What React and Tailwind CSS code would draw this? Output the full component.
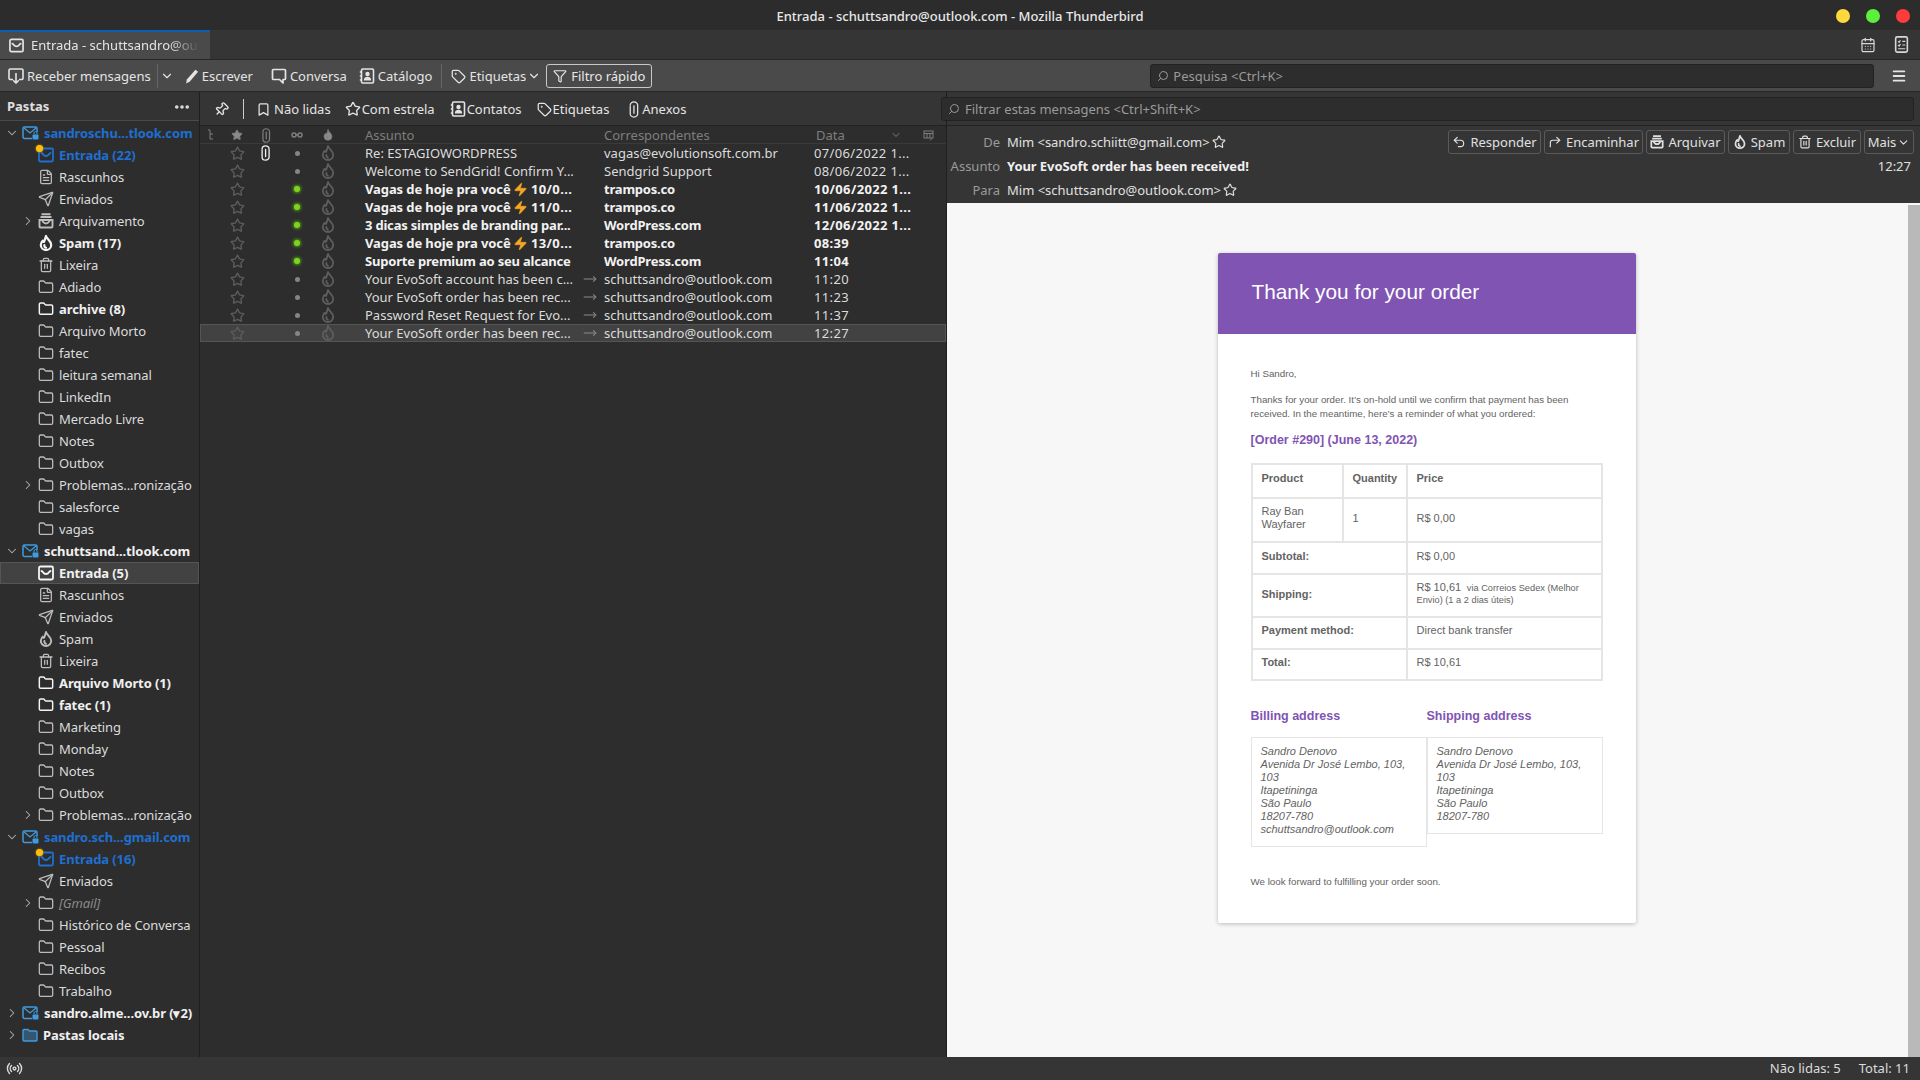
import React from "react";
import { Bookmark, CalendarDays, ChevronDown, ChevronRight, Ellipsis, FileText, Filter, Folder, Menu, Pin, Radio, Search, Send, Star, Tag, Trash2, MoveRight, Zap, Undo2, CornerUpRight } from "lucide-react";

const Inbox = ({ size = 16, className = "" }) => (
  <svg width={size} height={size} viewBox="0 0 16 16" fill="none" stroke="currentColor" strokeWidth="1.8" className={className}>
    <rect x="1" y="1.5" width="14" height="13" rx="1.5" />
    <path d="M3.5 6 C5 6 5 9 8 9 C11 9 11 6 12.5 6" strokeLinecap="round" />
  </svg>
);

const Flame = ({ size = 16, className = "", fill = "none", strokeWidth = 1.8 }) => (
  <svg width={size} height={size} viewBox="0 0 16 16" fill={fill} stroke="currentColor" strokeWidth={strokeWidth} strokeLinejoin="round" strokeLinecap="round" className={className}>
    <path d="M8 1 C8.5 4 13.2 5.5 13.2 10 A5.2 5 0 0 1 2.8 10 C2.8 8 3.6 6.8 4.8 5.6 C5 6.8 5.6 7.2 6.2 6.6 C7 5 7.2 3 8 1 Z" />
    <path d="M8 12.8 A2.5 2.5 0 0 1 6.4 10" />
  </svg>
);

const Clip = ({ size = 14, className = "", strokeWidth = 1.3 }) => (
  <svg width={size * 0.7} height={size} viewBox="0 0 11 16" fill="none" stroke="currentColor" strokeWidth={strokeWidth} strokeLinecap="round" className={className}>
    <path d="M5.5 4.5 V11.5" />
    <path d="M2 4 A3.5 3.2 0 0 1 9 4 V12 A3.5 3.2 0 0 1 2 12 V5" />
  </svg>
);

const Archive = ({ size = 16, className = "", strokeWidth = 1.6 }) => (
  <svg width={size} height={size} viewBox="0 0 16 16" fill="none" stroke="currentColor" strokeWidth={strokeWidth} className={className}>
    <path d="M3.5 1.2 H12.5 M2.5 4 H13.5" />
    <path d="M1.5 7 H14.5 V13.5 A1 1 0 0 1 13.5 14.5 H2.5 A1 1 0 0 1 1.5 13.5 Z" />
    <path d="M4 7 C5 9.5 6 10.5 8 10.5 C10 10.5 11 9.5 12 7" />
  </svg>
);

const Contact = ({ size = 16, className = "" }) => (
  <svg width={size} height={size} viewBox="0 0 16 16" fill="none" stroke="currentColor" strokeWidth="1.6" className={className}>
    <rect x="2.5" y="1" width="12" height="14" rx="1.2" />
    <path d="M0.8 4 H3 M0.8 8 H3 M0.8 12 H3" />
    <circle cx="8.5" cy="6" r="2.2" fill="currentColor" stroke="none" />
    <path d="M4.8 12.5 C5 9.5 6.5 8.8 8.5 8.8 C10.5 8.8 12 9.5 12.2 12.5 Z" fill="currentColor" stroke="none" />
  </svg>
);

const GetMail = ({ size = 16, className = "" }) => (
  <svg width={size} height={size} viewBox="0 0 16 16" fill="none" stroke="currentColor" strokeWidth="1.6" className={className}>
    <path d="M5 11.5 H2.5 A1.3 1.3 0 0 1 1 10.2 V2.3 A1.3 1.3 0 0 1 2.5 1 H13.5 A1.3 1.3 0 0 1 15 2.3 V10.2 A1.3 1.3 0 0 1 13.5 11.5 H11" />
    <path d="M8 5 V15 M5.2 12.2 L8 15 L10.8 12.2" />
  </svg>
);

const Bubble = ({ size = 16, className = "" }) => (
  <svg width={size} height={size} viewBox="0 0 16 16" fill="none" stroke="currentColor" strokeWidth="1.7" strokeLinejoin="round" className={className}>
    <path d="M2.5 1.5 H13.5 A1 1 0 0 1 14.5 2.5 V10.5 A1 1 0 0 1 13.5 11.5 H12 V15 L8.5 11.5 H2.5 A1 1 0 0 1 1.5 10.5 V2.5 A1 1 0 0 1 2.5 1.5 Z" />
  </svg>
);

const Quill = ({ size = 16, className = "" }) => (
  <svg width={size} height={size} viewBox="0 0 16 16" fill="currentColor" className={className}>
    <path d="M12.2 0.8 L15 3 L6 13.6 L2.2 15.4 L3 11.2 Z" />
  </svg>
);

const Tasks = ({ size = 16, className = "" }) => (
  <svg width={size} height={size} viewBox="0 0 16 16" fill="none" stroke="currentColor" strokeWidth="1.5" className={className}>
    <rect x="2.5" y="0.8" width="11" height="14.4" rx="1.5" />
    <path d="M4.8 5 L5.8 6 L7 4 M8.8 5 H11.5 M4.8 8.5 L5.8 9.5 L7 7.5 M8.8 8.5 H11.5 M4.8 12 H11.5" strokeWidth="1.1" />
  </svg>
);

const Account = ({ local = false }) =>
  local ? (
    <svg width="16" height="14" viewBox="0 0 16 14" className="shrink-0">
      <path d="M1 2.5 A1 1 0 0 1 2 1.5 H6 L7.5 3 H14 A1 1 0 0 1 15 4 V12 A1 1 0 0 1 14 13 H2 A1 1 0 0 1 1 12 Z" fill="#35566f" stroke="#3f9be0" strokeWidth="1.4" />
    </svg>
  ) : (
    <svg width="17" height="14" viewBox="0 0 17 14" fill="none" className="shrink-0">
      <path d="M10 12.5 H2.5 A1.5 1.5 0 0 1 1 11 V2.5 A1.5 1.5 0 0 1 2.5 1 H13.5 A1.5 1.5 0 0 1 15 2.5 V6" stroke="#3f9be0" strokeWidth="1.5" />
      <path d="M2 2 L8 7 L14 2" stroke="#3f9be0" strokeWidth="1.3" />
      <rect x="10.5" y="8.5" width="6" height="5" rx="1" fill="#3f9be0" />
      <path d="M12 8.5 V7 A1.5 1.5 0 0 1 15 7 V8.5" stroke="#3f9be0" strokeWidth="1" />
    </svg>
  );

const ICONS = { inbox: Inbox, draft: FileText, sent: Send, archive: Archive, spam: Flame, trash: Trash2, folder: Folder };

const folders = [
  { t: "sandroschu...tlook.com", acc: 1, open: 1, blue: 1 },
  { t: "Entrada (22)", i: "inbox", blue: 1, b: 1, dot: 1 },
  { t: "Rascunhos", i: "draft" },
  { t: "Enviados", i: "sent" },
  { t: "Arquivamento", i: "archive", exp: 1 },
  { t: "Spam (17)", i: "spam", b: 1 },
  { t: "Lixeira", i: "trash" },
  { t: "Adiado", i: "folder" },
  { t: "archive (8)", i: "folder", b: 1 },
  { t: "Arquivo Morto", i: "folder" },
  { t: "fatec", i: "folder" },
  { t: "leitura semanal", i: "folder" },
  { t: "LinkedIn", i: "folder" },
  { t: "Mercado Livre", i: "folder" },
  { t: "Notes", i: "folder" },
  { t: "Outbox", i: "folder" },
  { t: "Problemas...ronização", i: "folder", exp: 1 },
  { t: "salesforce", i: "folder" },
  { t: "vagas", i: "folder" },
  { t: "schuttsand...tlook.com", acc: 1, open: 1 },
  { t: "Entrada (5)", i: "inbox", b: 1, sel: 1 },
  { t: "Rascunhos", i: "draft" },
  { t: "Enviados", i: "sent" },
  { t: "Spam", i: "spam" },
  { t: "Lixeira", i: "trash" },
  { t: "Arquivo Morto (1)", i: "folder", b: 1 },
  { t: "fatec (1)", i: "folder", b: 1 },
  { t: "Marketing", i: "folder" },
  { t: "Monday", i: "folder" },
  { t: "Notes", i: "folder" },
  { t: "Outbox", i: "folder" },
  { t: "Problemas...ronização", i: "folder", exp: 1 },
  { t: "sandro.sch...gmail.com", acc: 1, open: 1, blue: 1 },
  { t: "Entrada (16)", i: "inbox", blue: 1, b: 1, dot: 1 },
  { t: "Enviados", i: "sent" },
  { t: "[Gmail]", i: "folder", exp: 1, dim: 1 },
  { t: "Histórico de Conversa", i: "folder" },
  { t: "Pessoal", i: "folder" },
  { t: "Recibos", i: "folder" },
  { t: "Trabalho", i: "folder" },
  { t: "sandro.alme...ov.br (▾2)", acc: 1 },
  { t: "Pastas locais", acc: 1, local: 1 },
];

function FolderRow({ f }) {
  const Ic = f.i ? ICONS[f.i] : null;
  const color = f.blue ? "text-[#1f6fd0]" : f.dim ? "text-[#8a8a8a] italic" : f.b || f.acc ? "text-[#f0f0f0]" : "text-[#dcdcdc]";
  return (
    <div className={`h-[22px] flex items-center relative tracking-[-0.1px] ${f.sel ? "bg-[#424242] outline outline-[#555555] -outline-offset-1" : ""} ${f.b || f.acc ? "font-bold" : ""} ${color}`}>
      {f.acc ? (
        <>
          <div className="w-[22px] flex justify-center shrink-0 text-[#b0b0b0] pl-px">
            {f.open ? <ChevronDown size={14} strokeWidth={1.8} /> : <ChevronRight size={14} strokeWidth={1.8} />}
          </div>
          <Account local={f.local} />
          <span className="ml-[5px] whitespace-nowrap">{f.t}</span>
        </>
      ) : (
        <>
          <div className="w-[38px] flex justify-end pr-[3px] shrink-0 text-[#b0b0b0]">
            {f.exp ? <ChevronRight size={14} strokeWidth={1.8} /> : null}
          </div>
          <div className={`relative w-[16px] flex justify-center shrink-0 ${f.blue ? "text-[#1f6fd0]" : f.b ? "text-[#f5f5f5]" : "text-[#bdbdbd]"}`}>
            <Ic size={16} strokeWidth={f.b ? 2.2 : 1.9} />
            {f.dot ? <span className="absolute -left-[2px] -top-[2px] w-[7px] h-[7px] rounded-full bg-[#ffc107] shadow-[0_0_2px_#ff9800]" /> : null}
          </div>
          <span className="ml-[5px] whitespace-nowrap">{f.t}</span>
        </>
      )}
    </div>
  );
}

const msgs = [
  ["Re: ESTAGIOWORDPRESS", "vagas@evolutionsoft.com.br", "07/06/2022 1...", { clip: 1 }],
  ["Welcome to SendGrid! Confirm Y...", "Sendgrid Support", "08/06/2022 1...", {}],
  [["Vagas de hoje pra você ", "10/0..."], "trampos.co", "10/06/2022 1...", { u: 1 }],
  [["Vagas de hoje pra você ", "11/0..."], "trampos.co", "11/06/2022 1...", { u: 1 }],
  ["3 dicas simples de branding par...", "WordPress.com", "12/06/2022 1...", { u: 1 }],
  [["Vagas de hoje pra você ", "13/0..."], "trampos.co", "08:39", { u: 1 }],
  ["Suporte premium ao seu alcance", "WordPress.com", "11:04", { u: 1 }],
  ["Your EvoSoft account has been c...", "schuttsandro@outlook.com", "11:20", { out: 1 }],
  ["Your EvoSoft order has been rec...", "schuttsandro@outlook.com", "11:23", { out: 1 }],
  ["Password Reset Request for Evo...", "schuttsandro@outlook.com", "11:37", { out: 1 }],
  ["Your EvoSoft order has been rec...", "schuttsandro@outlook.com", "12:27", { out: 1, sel: 1 }],
];

const gridCols = "grid grid-cols-[22px_30px_28px_34px_28px_23px_215px_20px_4px_210px_1fr] items-center";

function MsgRow({ m }) {
  const [s, c, d, o] = m;
  return (
    <div className={`${gridCols} h-[18px] ${o.u ? "font-bold text-[#f2f2f2] tracking-[-0.2px]" : "text-[#dcdcdc]"} ${o.sel ? "bg-[#424242] outline outline-[#555555] -outline-offset-1" : ""}`}>
      <span />
      <span className="flex justify-center text-[#5c5c5c]"><Star size={15} strokeWidth={2.2} /></span>
      <span className="flex justify-center text-[#f0f0f0]">{o.clip ? <Clip size={16} /> : null}</span>
      <span className="flex justify-center">
        {o.u ? <span className="w-[6px] h-[6px] rounded-full bg-[#7ed321] shadow-[0_0_3px_1px_#4f9a10]" /> : <span className="w-[5px] h-[5px] rounded-full bg-[#858585]" />}
      </span>
      <span className="flex justify-center text-[#5e5e5e]"><Flame size={16} /></span>
      <span />
      <span className="whitespace-nowrap flex items-center">
        {Array.isArray(s) ? (
          <>
            <span className="whitespace-pre tracking-[-0.1px]">{s[0]}</span>
            <Zap size={15} className="text-[#f5a623] shrink-0 -ml-px" fill="#f5a623" strokeWidth={1} />
            <span className="whitespace-pre ml-[3px] tracking-[0.4px]">{s[1]}</span>
          </>
        ) : s}
      </span>
      <span className="flex justify-center text-[#8a8a8a]">{o.out ? <MoveRight size={14} strokeWidth={1.8} /> : null}</span>
      <span />
      <span className="whitespace-nowrap">{c}</span>
      <span className="whitespace-nowrap tracking-[0.35px]">{d}</span>
    </div>
  );
}

const TB = ({ icon: I, children, className = "", size = 15, sw = 2 }) => (
  <div className={`flex items-center gap-[3px] text-[#e4e4e4] whitespace-nowrap ${className}`}>
    <I size={size} strokeWidth={sw} className="shrink-0" />
    <span>{children}</span>
  </div>
);

const HB = ({ icon: I, children, w }) => (
  <div className={`h-[24px] border border-[#5a5a5a] rounded-[3px] flex items-center justify-center gap-[4px] text-[#e0e0e0] whitespace-nowrap ${w}`}>
    {I ? <I size={14} strokeWidth={2} className="shrink-0" /> : null}
    <span>{children}</span>
  </div>
);

const td = "border-2 border-[#e5e5e5] px-[9px] align-middle";

function Addr({ email, h }) {
  return (
    <div className={`w-[176px] ${h} border border-[#e5e5e5] pl-[9px] pt-[7px] italic leading-[13px] text-[11px] text-[#636363]`}>
      Sandro Denovo<br />Avenida Dr José Lembo, 103,<br />103<br />Itapetininga<br />São Paulo<br />18207-780
      {email ? <><br />schuttsandro@outlook.com</> : null}
    </div>
  );
}

export default function App() {
  return (
    <div className="w-[1920px] h-[1080px] overflow-hidden flex flex-col bg-[#2d2d2d] text-[13px] leading-none text-[#e0e0e0] font-['Noto_Sans',sans-serif]">
      {/* title bar */}
      <div className="h-[30px] shrink-0 bg-[#2c2c2c] relative flex items-center justify-center pt-[2px] text-[#e8e8e8] font-medium">
        Entrada - schuttsandro@outlook.com - Mozilla Thunderbird
        <div className="absolute right-[10px] top-[9px] flex gap-[16px]">
          <span className="w-[14px] h-[14px] rounded-full bg-[#ffd83d]" />
          <span className="w-[14px] h-[14px] rounded-full bg-[#5cf03a]" />
          <span className="w-[14px] h-[14px] rounded-full bg-[#ff3b3b]" />
        </div>
      </div>
      {/* tabs */}
      <div className="h-[30px] shrink-0 bg-[#353535] border-b border-[#262626] flex items-stretch">
        <div className="w-[210px] bg-[#4a4a4a] border-t-2 border-[#0b5fb5] flex items-center pl-[9px] gap-[7px] text-[#e4e4e4] whitespace-nowrap">
          <Inbox size={15} className="shrink-0" />
          <span className="w-[168px] overflow-hidden py-[3px] [mask-image:linear-gradient(to_right,black_82%,transparent)]">Entrada - schuttsandro@outlook.com</span>
        </div>
        <div className="flex-1" />
        <div className="flex items-center gap-[17px] pr-[10px] text-[#d8d8d8]">
          <CalendarDays size={16} strokeWidth={1.8} className="ml-[2px]" />
          <Tasks size={17} />
        </div>
      </div>
      {/* main toolbar */}
      <div className="h-[32px] shrink-0 bg-[#4a4a4a] border-b border-[#262626] flex items-center pl-[8px]">
        <TB icon={GetMail} size={16} className="pt-px">Receber mensagens</TB>
        <div className="w-px h-[24px] bg-[#666666] ml-[6px]" />
        <ChevronDown size={14} strokeWidth={2} className="ml-[2px] text-[#e4e4e4]" />
        <TB icon={Quill} className="ml-[10px] pt-px">Escrever</TB>
        <TB icon={Bubble} size={16} className="ml-[18px] pt-px">Conversa</TB>
        <TB icon={Contact} size={16} className="ml-[12px] pt-px">Catálogo</TB>
        <div className="w-px h-[24px] bg-[#666666] ml-[9px]" />
        <TB icon={Tag} className="ml-[9px] pt-px">Etiquetas</TB>
        <ChevronDown size={14} strokeWidth={2} className="ml-[1px] text-[#e4e4e4]" />
        <div className="ml-[5px] w-[106px] h-[24px] border border-[#c8c8c8] rounded-[3px] flex items-center justify-center gap-[4px] pt-px text-[#e8e8e8]">
          <Filter size={14} strokeWidth={2} />Filtro rápido
        </div>
        <div className="ml-[498px] w-[724px] h-[24px] bg-[#2d2d2d] border border-[#222222] rounded-[3px] flex items-center pl-[6px] pt-px gap-[4px] text-[#9a9a9a]">
          <Search size={12} className="-scale-x-100" />Pesquisa &lt;Ctrl+K&gt;
        </div>
        <Menu size={16} strokeWidth={2.8} className="ml-[17px] text-[#e4e4e4]" />
      </div>
      {/* body */}
      <div className="flex-1 flex min-h-0">
        {/* folders */}
        <div className="w-[200px] shrink-0 border-r border-[#1f1f1f] bg-[#2d2d2d] flex flex-col">
          <div className="h-[29px] border-b border-[#4a4a4a] bg-[#333333] flex items-center justify-between pl-[7px] pr-[8px] pt-px font-bold">
            <span>Pastas</span>
            <Ellipsis size={18} strokeWidth={2.8} />
          </div>
          <div className="pt-px">
            {folders.map((f, i) => <FolderRow key={i} f={f} />)}
          </div>
        </div>
        {/* list column */}
        <div className="w-[746px] shrink-0 flex flex-col bg-[#2d2d2d]">
          <div className="h-[34px] shrink-0 bg-[#353535] border-b border-[#222222] flex items-center pl-[14px] pt-px text-[#e4e4e4]">
            <Pin size={15} strokeWidth={2.2} className="rotate-45" />
            <div className="w-px h-[20px] bg-[#cccccc] ml-[14px]" />
            <TB icon={Bookmark} className="ml-[12px]">Não lidas</TB>
            <TB icon={Star} size={16} className="ml-[14px] !gap-[1px]">Com estrela</TB>
            <TB icon={Contact} size={16} className="ml-[15px] !gap-[1px]">Contatos</TB>
            <TB icon={Tag} className="ml-[15px] !gap-[1px]">Etiquetas</TB>
            <TB icon={Clip} size={17} sw={1.2} className="ml-[19px] !gap-[2px]">Anexos</TB>
          </div>
          <div className={`${gridCols} h-[18px] shrink-0 border-b border-[#3a3a3a] pt-px text-[#7e7e7e]`}>
            <span className="flex justify-center">
              <svg width="8" height="12" viewBox="0 0 8 12" fill="none" stroke="currentColor" strokeWidth="1"><path d="M1 1 H3 V10 H6 M3 5 H6" /></svg>
            </span>
            <span className="flex justify-center"><Star size={12} fill="#8a8a8a" /></span>
            <span className="flex justify-center"><Clip size={15} /></span>
            <span className="flex justify-center">
              <svg width="12" height="8" viewBox="0 0 12 8" fill="none" stroke="currentColor" strokeWidth="1.5"><circle cx="3" cy="4" r="2" /><circle cx="9" cy="4" r="2" /><path d="M5 4 H7" /></svg>
            </span>
            <span className="flex justify-center"><Flame size={12} fill="#8a8a8a" strokeWidth={1} /></span>
            <span />
            <span>Assunto</span>
            <span />
            <span />
            <span>Correspondentes</span>
            <span className="flex items-center pl-[2px]">
              <span>Data</span>
              <ChevronDown size={12} className="ml-[45px]" />
              <svg width="11" height="11" viewBox="0 0 11 11" fill="none" stroke="currentColor" strokeWidth="1" className="ml-[21px]"><rect x="1" y="1" width="9" height="7" /><path d="M1 3.5 H10 M4 3.5 V8 M7 3.5 V8 M7 10.5 L9 8.5" /></svg>
            </span>
          </div>
          <div className="flex-1">
            {msgs.map((m, i) => <MsgRow key={i} m={m} />)}
          </div>
        </div>
        {/* reading column */}
        <div className="flex-1 min-w-0 flex flex-col border-l border-[#1f1f1f] bg-[#353535]">
          <div className="h-[34px] shrink-0 border-b border-[#222222] flex items-center">
            <div className="-ml-[6px] w-[973px] h-[24px] bg-[#2d2d2d] border border-[#222222] rounded-[3px] flex items-center pl-[6px] pt-px gap-[5px] text-[#9a9a9a] relative">
              <Search size={12} className="-scale-x-100" />Filtrar estas mensagens &lt;Ctrl+Shift+K&gt;
            </div>
          </div>
          <div className="h-[77px] shrink-0 flex flex-col relative">
            <div className="flex items-center h-[24px] mt-[4px]">
              <span className="w-[53px] text-right text-[#9a9a9a]">De</span>
              <span className="ml-[7px] flex items-center gap-[2px] whitespace-nowrap tracking-[-0.04px]">Mim &lt;sandro.schiitt@gmail.com&gt;<Star size={14} strokeWidth={2} /></span>
              <div className="flex-1" />
              <div className="flex gap-[3px] pr-[6px] text-[#e0e0e0]">
                <HB icon={Undo2} w="w-[93px]">Responder</HB>
                <HB icon={CornerUpRight} w="w-[99px]">Encaminhar</HB>
                <HB icon={Archive} w="w-[79px]">Arquivar</HB>
                <HB icon={Flame} w="w-[62px]">Spam</HB>
                <HB icon={Trash2} w="w-[68px]">Excluir</HB>
                <div className="w-[50px] h-[24px] border border-[#5a5a5a] rounded-[3px] flex items-center justify-center gap-[1px]">Mais<ChevronDown size={13} strokeWidth={2} /></div>
              </div>
            </div>
            <div className="flex items-center h-[24px] pt-px">
              <span className="w-[53px] text-right text-[#9a9a9a]">Assunto</span>
              <span className="ml-[7px] font-bold text-[#f0f0f0] whitespace-nowrap tracking-[-0.08px]">Your EvoSoft order has been received!</span>
              <div className="flex-1" />
              <span className="pr-[9px]">12:27</span>
            </div>
            <div className="flex items-center h-[24px]">
              <span className="w-[53px] text-right text-[#9a9a9a]">Para</span>
              <span className="ml-[7px] flex items-center gap-[2px] whitespace-nowrap">Mim &lt;schuttsandro@outlook.com&gt;<Star size={14} strokeWidth={2} /></span>
            </div>
          </div>
          {/* email */}
          <div className="flex-1 min-h-0 flex bg-[#f7f7f7] font-['Liberation_Sans',Arial,sans-serif] text-[#636363]">
            <div className="flex-1 flex justify-center pt-[50px]">
              <div className="w-[418px] h-[670px] mr-[2px] bg-white rounded-[2px] shadow-[0_1px_4px_rgba(0,0,0,0.25)] overflow-hidden">
                <div className="h-[81px] bg-[#7f54b3] pl-[34px] flex items-start pt-[28px]">
                  <span className="text-[20.8px] leading-[22px] text-white font-light">Thank you for your order</span>
                </div>
                <div className="px-[33px] pt-[33px] text-[9.75px] leading-[14px]">
                  <p>Hi Sandro,</p>
                  <p className="mt-[12px]">Thanks for your order. It’s on-hold until we confirm that payment has been<br />received. In the meantime, here’s a reminder of what you ordered:</p>
                  <p className="mt-[11px] text-[12.5px] leading-[16px] font-bold text-[#7f54b3]">[Order #290] (June 13, 2022)</p>
                  <table className="mt-[15px] w-[352px] table-fixed border-collapse border-2 border-[#e5e5e5] leading-[13px] text-[11px]">
                    <colgroup>
                      <col className="w-[91px]" />
                      <col className="w-[64px]" />
                      <col />
                    </colgroup>
                    <tbody>
                      <tr className="h-[34px] font-bold"><td className={`${td} pb-[5px]`}>Product</td><td className={`${td} pb-[5px]`}>Quantity</td><td className={`${td} pb-[5px]`}>Price</td></tr>
                      <tr className="h-[44px]"><td className={`${td} pb-[4px]`}>Ray Ban<br />Wayfarer</td><td className={`${td} pb-[4px]`}>1</td><td className={`${td} pb-[4px]`}>R$ 0,00</td></tr>
                      <tr className="h-[32px]"><td colSpan={2} className={`${td} pb-[3px] font-bold`}>Subtotal:</td><td className={`${td} pb-[3px]`}>R$ 0,00</td></tr>
                      <tr className="h-[43px]"><td colSpan={2} className={`${td} pb-[3px] font-bold`}>Shipping:</td><td className={`${td} pb-[3px] leading-[11px]`}>R$ 10,61 <span className="text-[9.25px]">&nbsp;via Correios Sedex (Melhor Envio) (1 a 2 dias úteis)</span></td></tr>
                      <tr className="h-[32px]"><td colSpan={2} className={`${td} pb-[5px] font-bold`}>Payment method:</td><td className={`${td} pb-[5px]`}>Direct bank transfer</td></tr>
                      <tr className="h-[31px]"><td colSpan={2} className={`${td} pb-[5px] font-bold`}>Total:</td><td className={`${td} pb-[5px]`}>R$ 10,61</td></tr>
                    </tbody>
                  </table>
                  <div className="flex mt-[27px] text-[12.5px] leading-[16px] font-bold text-[#7f54b3]">
                    <span className="w-[176px]">Billing address</span>
                    <span>Shipping address</span>
                  </div>
                  <div className="flex items-start mt-[13px]">
                    <Addr email h="h-[110px]" />
                    <Addr h="h-[97px]" />
                  </div>
                  <p className="mt-[28px]">We look forward to fulfilling your order soon.</p>
                </div>
              </div>
            </div>
            <div className="w-[12px] shrink-0 bg-[#b9b9b9] mt-[2px]" />
          </div>
        </div>
      </div>
      {/* status bar */}
      <div className="h-[23px] shrink-0 bg-[#353535] flex items-center justify-between pl-[6px] pr-[10px] text-[#dcdcdc]">
        <Radio size={17} strokeWidth={2} />
        <div className="flex gap-[18px]"><span>Não lidas: 5</span><span>Total: 11</span></div>
      </div>
    </div>
  );
}
